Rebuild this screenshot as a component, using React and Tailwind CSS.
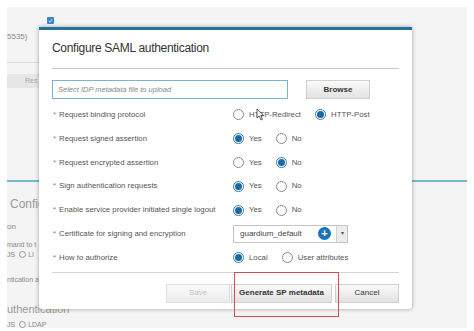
const font = { fontFamily: '"Liberation Sans", Arial, sans-serif' };

function Radio({ checked, label }) {
  return (
    <div className="mr-[14px] flex items-center">
      <span
        className={
          checked
            ? 'flex h-[11px] w-[11px] items-center justify-center rounded-full border border-[#3a80b5] bg-white'
            : 'flex h-[11px] w-[11px] items-center justify-center rounded-full border border-[#8c8c8c] bg-white'
        }
      >
        {checked ? <span className="h-[7px] w-[7px] rounded-full bg-[#1d6aa3]" /> : null}
      </span>
      <span className="ml-[5px] text-[7.8px] text-[#555]">{label}</span>
    </div>
  );
}

function Row({ label, children }) {
  return (
    <div className="flex h-[23.8px] items-center">
      <div className="w-[181px] pl-[1px] text-[7.8px] text-[#555]">
        <span className="mr-[3px] text-[#888]">*</span>
        {label}
      </div>
      <div className="flex items-center">{children}</div>
    </div>
  );
}

function YesNo({ yes }) {
  return (
    <>
      <Radio checked={yes} label="Yes" />
      <Radio checked={!yes} label="No" />
    </>
  );
}

export default function App() {
  return (
    <div className="relative h-[331px] w-[474px] overflow-hidden bg-white" style={font}>
      {/* page behind the dialog */}
      <div className="mx-[7px] mt-[7px] h-[321px] bg-[#f4f4f4] text-[#888]">
        <div className="flex h-[17px] items-end pl-[40px]">
          <span className="flex h-[7px] w-[7px] items-center justify-center rounded-[1px] bg-[#3b86c6] text-[6px] leading-none text-white">
            ✓
          </span>
        </div>
        <div className="mt-[8px] text-[8px] leading-[10px]">5535)</div>
        <div className="mt-[20px] h-px w-[60px] bg-[#dcdcdc]" />
        <div className="mt-[11px] flex h-[14px] w-[40px] items-center bg-[#e6e6e6] pl-[18px] text-[7px] text-[#aaa]">
          Res
        </div>
        <div className="mt-[92px] h-[2px] w-full bg-[#74b9cc]" />
        <div className="mt-[15px] pl-[3px] text-[12px] leading-[14px] text-[#999]">Config</div>
        <div className="mt-[11px] text-[8px] leading-[10px]">on</div>
        <div className="mt-[8px] text-[7px] leading-[9px]">mand to t</div>
        <div className="mt-[1px] flex items-center text-[7px] leading-[9px]">
          JS
          <span className="ml-[4px] mr-[2px] h-[7px] w-[7px] rounded-full border border-[#999]" />
          LI
        </div>
        <div className="mt-[16px] text-[7px] leading-[9px]">ntication a</div>
        <div className="mt-[19px] text-[11px] leading-[13px] text-[#999]">uthentication</div>
        <div className="mt-[4px] flex items-center text-[7px] leading-[9px]">
          JS
          <span className="ml-[4px] mr-[2px] h-[7px] w-[7px] rounded-full border border-[#999]" />
          LDAP
        </div>
      </div>

      {/* dialog */}
      <div className="absolute left-[39px] top-[27px] h-[282px] w-[373px] rounded-b-[3px] border-t-[3px] border-[#22719f] bg-white px-[13px] shadow-[0_0_4px_rgba(0,0,0,0.35)]">
        <div className="pt-[11px] text-[12px] leading-[15px] tracking-[-0.3px] text-[#333]">Configure SAML authentication</div>
        <div className="mt-[12px] h-px bg-[#c8c8c8]" />

        <div className="mt-[11px] flex items-center">
          <div className="flex h-[19px] w-[236px] items-center border border-[#79b3d3] pl-[5px] text-[7.5px] italic text-[#888]">
            Select IDP metadata file to upload
          </div>
          <button className="ml-[18px] flex h-[19px] w-[64px] items-center justify-center border border-[#d0d0d0] bg-gradient-to-b from-[#fafafa] to-[#e2e2e2] text-[8px] font-bold text-[#333]">
            Browse
          </button>
        </div>

        <div className="mt-[4px]">
          <Row label="Request binding protocol">
            <Radio checked={false} label="HTTP-Redirect" />
            <Radio checked label="HTTP-Post" />
          </Row>
          <Row label="Request signed assertion">
            <YesNo yes />
          </Row>
          <Row label="Request encrypted assertion">
            <YesNo yes={false} />
          </Row>
          <Row label="Sign authentication requests">
            <YesNo yes />
          </Row>
          <Row label="Enable service provider initiated single logout">
            <YesNo yes />
          </Row>
          <Row label="Certificate for signing and encryption">
            <div className="flex h-[18px] w-[115px] items-center border border-[#c4c4c4] bg-white">
              <span className="flex-1 pl-[6px] text-[8px] text-[#444]">guardium_default</span>
              <span className="mr-[5px] flex h-[13px] w-[13px] items-center justify-center rounded-full bg-[#1a73b8] text-[11px] font-bold leading-none text-white">
                +
              </span>
              <span className="flex h-full w-[11px] items-center justify-center border-l border-[#d0d0d0] bg-[#ececec] text-[6px] text-[#555]">
                ▾
              </span>
            </div>
          </Row>
          <Row label="How to authorize">
            <Radio checked label="Local" />
            <Radio checked={false} label="User attributes" />
          </Row>
        </div>

        <div className="mt-[2px] h-px bg-[#d4d4d4]" />

        <div className="mt-[11px] flex justify-end">
          <button className="flex h-[19px] w-[64px] items-center justify-center border border-[#dedede] bg-gradient-to-b from-[#fafafa] to-[#ececec] text-[8px] text-[#c4c4c4]">
            Save
          </button>
          <button className="ml-px flex h-[19px] w-[101px] items-center justify-center border border-[#d0d0d0] bg-gradient-to-b from-[#fafafa] to-[#e2e2e2] text-[8px] font-bold text-[#333]">
            Generate SP metadata
          </button>
          <button className="ml-[3px] flex h-[19px] w-[64px] items-center justify-center border border-[#d0d0d0] bg-gradient-to-b from-[#fafafa] to-[#e2e2e2] text-[8px] text-[#333]">
            Cancel
          </button>
        </div>
      </div>

      {/* highlight box */}
      <div className="absolute left-[234px] top-[272px] h-[45px] w-[105px] border-[1.5px] border-[#d64a5e]" />

      {/* mouse pointer */}
      <svg className="absolute left-[256px] top-[108px]" width="9" height="13" viewBox="0 0 9 13">
        <path d="M1 1 L1 10 L3.2 8 L5 12 L6.5 11.3 L4.8 7.5 L7.8 7.5 Z" fill="white" stroke="#333" strokeWidth="0.8" />
      </svg>
    </div>
  );
}
